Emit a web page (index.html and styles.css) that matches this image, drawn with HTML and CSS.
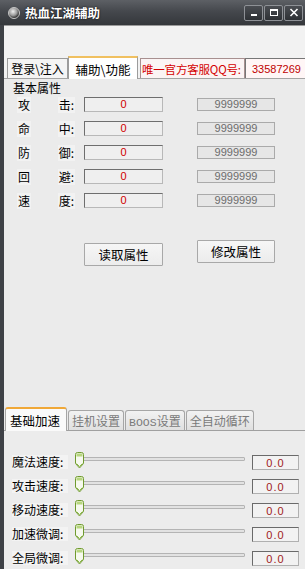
FILE: index.html
```html
<!DOCTYPE html>
<html lang="zh">
<head>
    <meta charset="UTF-8">
    <meta name="viewport" content="width=device-width, initial-scale=1.0">
    <title>热血江湖辅助</title>
    <link rel="stylesheet" href="styles.css">
</head>
<body>
<div class="window">
    <div class="titlebar">
        <span class="app-icon"></span>
        <span class="title">热血江湖辅助</span>
        <div class="win-btns">
            <span class="win-btn">
                <svg width="10" height="9" viewBox="0 0 10 9"><rect x="2" y="6" width="6" height="2" fill="#fff"/></svg>
            </span>
            <span class="win-btn">
                <svg width="10" height="9" viewBox="0 0 10 9"><rect x="1.5" y="1.5" width="7" height="6" fill="none" stroke="#fff" stroke-width="1"/><rect x="1.5" y="1" width="7" height="2" fill="#fff"/></svg>
            </span>
            <span class="win-btn close">
                <svg width="10" height="9" viewBox="0 0 10 9"><path d="M1.5 1 L8.5 8 M8.5 1 L1.5 8" stroke="#fff" stroke-width="1.6"/></svg>
            </span>
        </div>
    </div>

    <div class="client">
        <div class="client-top"></div>

        <div class="tabs-top">
            <div class="tab">登录\注入</div>
            <div class="tab active">辅助\功能</div>
            <div class="qq-label">唯一官方客服QQ号:</div>
            <div class="qq-input">33587269</div>
        </div>

        <div class="panel">
            <div class="group-title">基本属性</div>
            <div class="stats">
                <div class="stat-row">
                    <span class="stat-name"><span>攻</span><span>击:</span></span>
                    <span class="field">0</span>
                    <span class="field max">9999999</span>
                </div>
                <div class="stat-row">
                    <span class="stat-name"><span>命</span><span>中:</span></span>
                    <span class="field">0</span>
                    <span class="field max">9999999</span>
                </div>
                <div class="stat-row">
                    <span class="stat-name"><span>防</span><span>御:</span></span>
                    <span class="field">0</span>
                    <span class="field max">9999999</span>
                </div>
                <div class="stat-row">
                    <span class="stat-name"><span>回</span><span>避:</span></span>
                    <span class="field">0</span>
                    <span class="field max">9999999</span>
                </div>
                <div class="stat-row">
                    <span class="stat-name"><span>速</span><span>度:</span></span>
                    <span class="field">0</span>
                    <span class="field max">9999999</span>
                </div>
            </div>
            <div class="actions">
                <button class="btn read">读取属性</button>
                <button class="btn">修改属性</button>
            </div>
        </div>

        <div class="tabs-bottom">
            <div class="btab active">基础加速</div>
            <div class="btab">挂机设置</div>
            <div class="btab"><span class="latin">BOOS</span>设置</div>
            <div class="btab">全自动循环</div>
        </div>

        <div class="sliders">
            <div class="slider-row">
                <span class="s-label">魔法速度:</span>
                <div class="track-wrap"><div class="track"></div><svg class="thumb" width="9" height="17" viewBox="0 0 9 17"><path d="M0.5 2.5 Q0.5 0.5 2.5 0.5 H6.5 Q8.5 0.5 8.5 2.5 V11.5 L4.5 16 L0.5 11.5 Z" fill="#f6f9ee" stroke="#6f9a2e"/><rect x="1.5" y="1.5" width="6" height="3" fill="#b6d67e"/><path d="M1.5 11.5 L4.5 14.5 L7.5 11.5" fill="none" stroke="#8cb84a"/></svg></div>
                <span class="s-value">0.0</span>
            </div>
            <div class="slider-row">
                <span class="s-label">攻击速度:</span>
                <div class="track-wrap"><div class="track"></div><svg class="thumb" width="9" height="17" viewBox="0 0 9 17"><path d="M0.5 2.5 Q0.5 0.5 2.5 0.5 H6.5 Q8.5 0.5 8.5 2.5 V11.5 L4.5 16 L0.5 11.5 Z" fill="#f6f9ee" stroke="#6f9a2e"/><rect x="1.5" y="1.5" width="6" height="3" fill="#b6d67e"/><path d="M1.5 11.5 L4.5 14.5 L7.5 11.5" fill="none" stroke="#8cb84a"/></svg></div>
                <span class="s-value">0.0</span>
            </div>
            <div class="slider-row">
                <span class="s-label">移动速度:</span>
                <div class="track-wrap"><div class="track"></div><svg class="thumb" width="9" height="17" viewBox="0 0 9 17"><path d="M0.5 2.5 Q0.5 0.5 2.5 0.5 H6.5 Q8.5 0.5 8.5 2.5 V11.5 L4.5 16 L0.5 11.5 Z" fill="#f6f9ee" stroke="#6f9a2e"/><rect x="1.5" y="1.5" width="6" height="3" fill="#b6d67e"/><path d="M1.5 11.5 L4.5 14.5 L7.5 11.5" fill="none" stroke="#8cb84a"/></svg></div>
                <span class="s-value">0.0</span>
            </div>
            <div class="slider-row">
                <span class="s-label">加速微调:</span>
                <div class="track-wrap"><div class="track"></div><svg class="thumb" width="9" height="17" viewBox="0 0 9 17"><path d="M0.5 2.5 Q0.5 0.5 2.5 0.5 H6.5 Q8.5 0.5 8.5 2.5 V11.5 L4.5 16 L0.5 11.5 Z" fill="#f6f9ee" stroke="#6f9a2e"/><rect x="1.5" y="1.5" width="6" height="3" fill="#b6d67e"/><path d="M1.5 11.5 L4.5 14.5 L7.5 11.5" fill="none" stroke="#8cb84a"/></svg></div>
                <span class="s-value">0.0</span>
            </div>
            <div class="slider-row">
                <span class="s-label">全局微调:</span>
                <div class="track-wrap"><div class="track"></div><svg class="thumb" width="9" height="17" viewBox="0 0 9 17"><path d="M0.5 2.5 Q0.5 0.5 2.5 0.5 H6.5 Q8.5 0.5 8.5 2.5 V11.5 L4.5 16 L0.5 11.5 Z" fill="#f6f9ee" stroke="#6f9a2e"/><rect x="1.5" y="1.5" width="6" height="3" fill="#b6d67e"/><path d="M1.5 11.5 L4.5 14.5 L7.5 11.5" fill="none" stroke="#8cb84a"/></svg></div>
                <span class="s-value">0.0</span>
            </div>
        </div>
    </div>
</div>
</body>
</html>
```

FILE: styles.css
```css
* {
    box-sizing: border-box;
}

body {
    margin: 0;
    font-family: "Noto Sans CJK SC", "Liberation Sans", sans-serif;
    font-size: 12px;
    line-height: 14px;
    color: #000;
    background: #3c3f44;
}

.window {
    width: 305px;
    height: 569px;
    display: flex;
    flex-direction: column;
    overflow: hidden;
    background: #3e4146;
}

/* title bar */
.titlebar {
    height: 25px;
    flex: none;
    display: flex;
    align-items: center;
    padding: 0 2px 0 8px;
    background: linear-gradient(#5d6065, #45484d 45%, #34373b);
}

.app-icon {
    width: 12px;
    height: 12px;
    border-radius: 50%;
    background: radial-gradient(circle at 40% 35%, #f0f0f0, #9a9a9a 45%, #2a2a2a 75%);
    border: 1px solid #c8c8c8;
}

.title {
    margin-left: 5px;
    color: #fff;
    font-weight: bold;
    font-size: 12.5px;
    text-shadow: 0 0 2px #000;
}

.win-btns {
    margin-left: auto;
    display: flex;
    gap: 1px;
}

.win-btn {
    width: 19px;
    height: 16px;
    display: flex;
    align-items: center;
    justify-content: center;
    border: 1px solid #8e9196;
    border-radius: 2px;
    background: linear-gradient(#4a4d52, #2e3135);
}

/* client area */
.client {
    flex: 1;
    margin-left: 4px;
    display: flex;
    flex-direction: column;
    background: #ebebeb;
    overflow: hidden;
}

.client-top {
    height: 31px;
    flex: none;
    border-top: 1px solid #9a9a9a;
    background: #f2f2f2;
}

.tabs-top {
    height: 22px;
    flex: none;
    display: flex;
    align-items: flex-end;
    padding-left: 3px;
    background: #f2f2f2;
}

.tab {
    height: 20px;
    width: 61px;
    padding-top: 3px;
    text-align: center;
    border: 1px solid #9c9c9c;
    border-bottom: none;
    background: #f4f4f4;
}

.tab.active {
    width: 70px;
    height: 23px;
    margin-bottom: -1px;
    padding-top: 5px;
    background: #fff;
    border-top: 2px solid #f0c060;
    position: relative;
    font-size: 12.5px;
}

.qq-label {
    height: 20px;
    width: 105px;
    margin-left: 2px;
    padding: 3px 0 0 1px;
    font-size: 11.5px;
    letter-spacing: -0.2px;
    color: #d40000;
    background: #fbf4f4;
    border: 1px solid #a89090;
    border-bottom: none;
    white-space: nowrap;
    overflow: hidden;
}

.qq-input {
    flex: 1;
    height: 20px;
    padding: 3px 0 0 6px;
    font-family: "Liberation Sans", sans-serif;
    font-size: 11px;
    color: #c00000;
    background: #fff6f6;
    border: 1px solid #777;
    border-right: none;
    border-bottom: none;
}

/* basic attributes */
.panel {
    height: 329px;
    flex: none;
    border-top: 1px solid #a4a4a4;
    background: #ebebeb;
}

.group-title {
    margin: 2px 0 0 9px;
    line-height: 14px;
}

.stats {
    margin-top: 2px;
    display: flex;
    flex-direction: column;
    gap: 9px;
}

.stat-row {
    height: 15px;
    display: flex;
    align-items: center;
}

.stat-name {
    width: 80px;
    padding: 0 9px 0 13px;
    display: flex;
    justify-content: space-between;
}

.stat-name span {
    background: #f2f2f2;
    padding: 1px 1px;
}

.field {
    width: 79px;
    height: 15px;
    margin-right: 34px;
    font-family: "Liberation Sans", sans-serif;
    font-size: 11px;
    line-height: 13px;
    text-align: center;
    color: #d00000;
    background: #efefef;
    border: 1px solid #6e6e6e;
    border-right-color: #b8b8b8;
    border-bottom-color: #b8b8b8;
}

.field.max {
    width: 78px;
    height: 13px;
    margin-right: 0;
    line-height: 11px;
    color: #6c6c6c;
    background: #e6e6e6;
    border: 1px solid #aaa;
}

.actions {
    margin-top: 32px;
    display: flex;
    align-items: flex-start;
}

.btn {
    width: 78px;
    height: 23px;
    margin-left: 34px;
    padding: 0;
    font-family: "Noto Sans CJK SC", sans-serif;
    font-size: 12.5px;
    color: #000;
    background: linear-gradient(#f6f6f6, #ececec);
    border: 1px solid #a8a8a8;
    border-radius: 1px;
}

.btn.read {
    width: 79px;
    margin-left: 80px;
    margin-top: 3px;
}

/* lower tabs */
.tabs-bottom {
    height: 24px;
    flex: none;
    display: flex;
    align-items: flex-end;
    gap: 1px;
    padding-left: 1px;
    border-bottom: 1px solid #a0a0a0;
    background: #ebebeb;
}

.btab {
    height: 20px;
    padding: 3px 3px 0;
    color: #7a7a7a;
    white-space: nowrap;
    border: 1px solid #a6a6a6;
    border-bottom: none;
    border-radius: 3px 3px 0 0;
    background: linear-gradient(#f2f2f2, #e0e0e0);
}

.btab.active {
    width: 62px;
    height: 24px;
    margin-bottom: -1px;
    padding: 5px 4px 0;
    color: #000;
    font-size: 12.5px;
    background: #fafafa;
    border-top: 2px solid #f0a838;
}

.latin {
    font-family: "Liberation Mono", monospace;
    font-size: 11.5px;
}

/* sliders */
.sliders {
    flex: 1;
    padding-top: 23px;
    display: flex;
    flex-direction: column;
    gap: 8px;
    background: #ececec;
}

.slider-row {
    height: 16px;
    display: flex;
    align-items: center;
}

.s-label {
    width: 56px;
    margin-left: 8px;
    white-space: nowrap;
    background: #f3f3f3;
}

.track-wrap {
    width: 180px;
    height: 16px;
    position: relative;
}

.track {
    position: absolute;
    left: 15px;
    right: 3px;
    top: 3px;
    height: 4px;
    background: #e2e2e2;
    border: 1px solid #b4b4b4;
    border-radius: 1px;
}

.thumb {
    position: absolute;
    left: 7px;
    top: -2px;
}

.s-value {
    width: 47px;
    height: 15px;
    margin-left: 4px;
    font-family: "Liberation Sans", sans-serif;
    font-size: 11px;
    line-height: 14px;
    letter-spacing: 1px;
    text-align: center;
    color: #a02020;
    background: #f2f2f2;
    border: 1px solid #6a6a6a;
    border-right-color: #b0b0b0;
    border-bottom-color: #b0b0b0;
}
```
